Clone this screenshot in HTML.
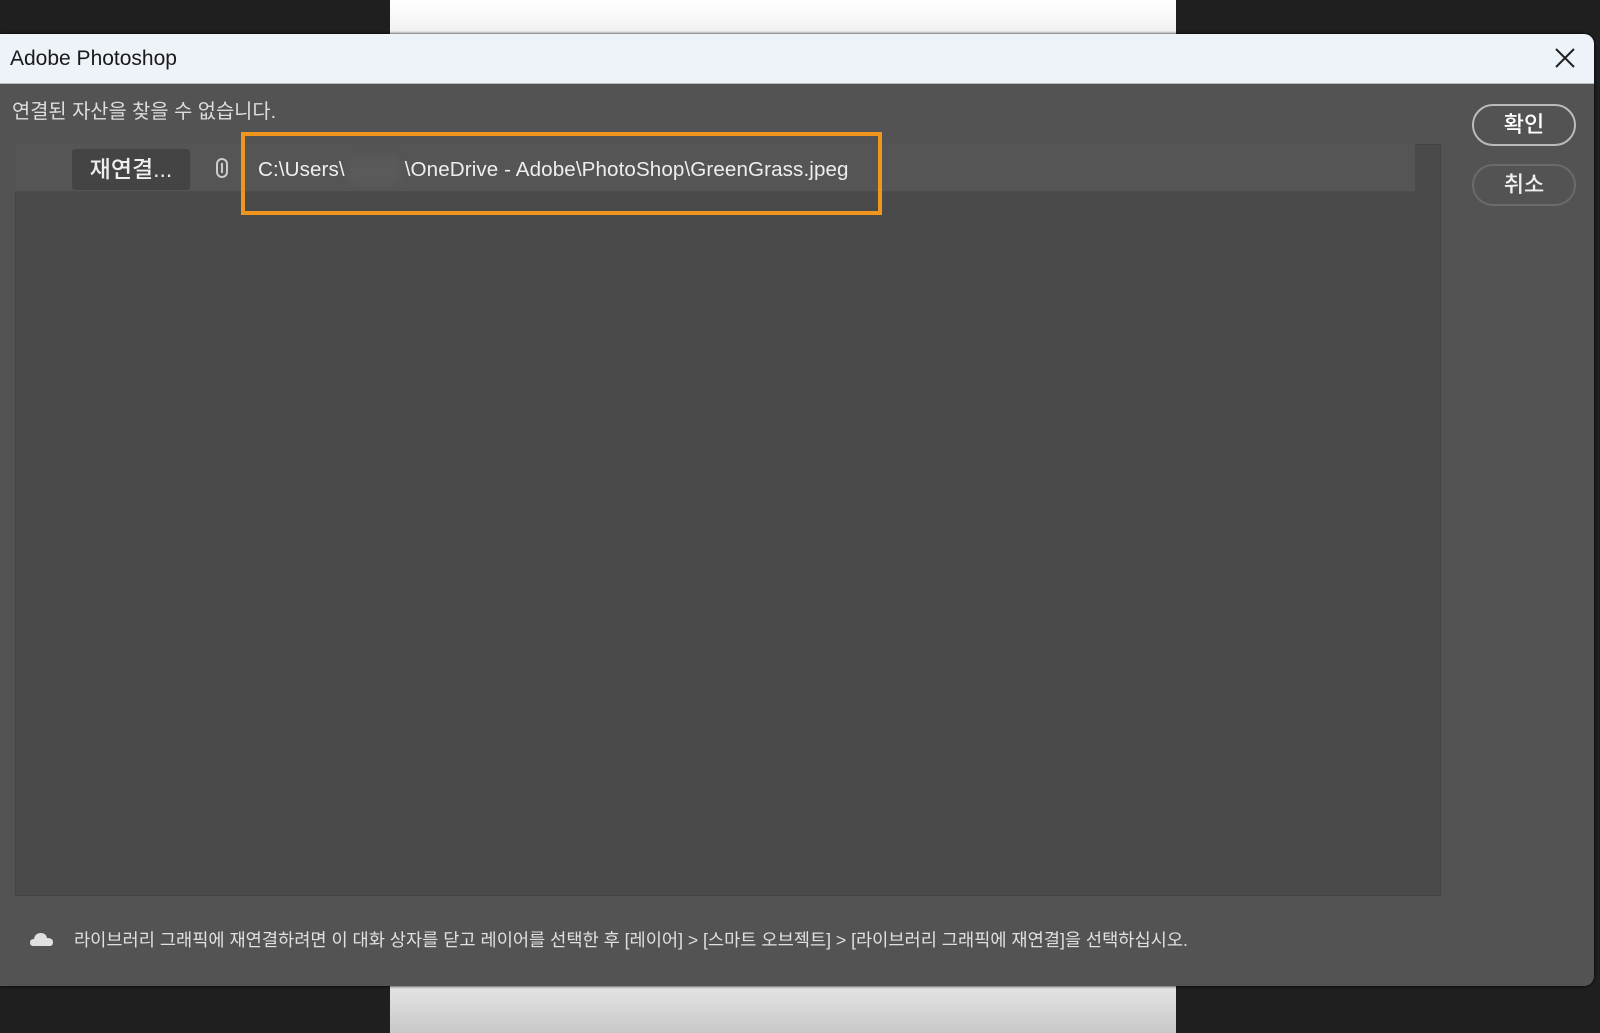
<!DOCTYPE html>
<html><head><meta charset="utf-8"><style>
*{margin:0;padding:0;box-sizing:border-box}
body{width:1600px;height:1033px;background:#1f1f1f;position:relative;overflow:hidden;font-family:"Liberation Sans","Noto Sans CJK KR",sans-serif}
.abs{position:absolute}
</style></head><body>
<div class="abs" style="left:390px;top:0;width:786px;height:40px;background:linear-gradient(#fff,#eee)"></div>
<div class="abs" style="left:390px;top:980px;width:786px;height:53px;background:linear-gradient(#e8e8e8,#c8c8c8)"></div>
<div class="abs" style="left:0;top:34px;width:1594px;height:952px;background:#535353;border-radius:0 10px 10px 0;overflow:hidden;box-shadow:0 0 3px #000">
  <div class="abs" style="left:0;top:0;width:1594px;height:50px;background:#eef2f9;border-bottom:1px solid #bbb"></div>
  <div class="abs" style="left:10px;top:13px;font-size:21px;color:#1a1a1a">Adobe Photoshop</div>
  <svg class="abs" style="left:1554px;top:13px" width="22" height="22" viewBox="0 0 22 22"><path d="M2 2L20 20M20 2L2 20" stroke="#222" stroke-width="2"/></svg>
  <div class="abs" style="left:12px;top:61px;font-size:19.8px;color:#ddd">연결된 자산을 찾을 수 없습니다.</div>
  <div class="abs" style="left:15px;top:110px;width:1426px;height:752px;background:#4a4a4a;border:1px solid #444"></div>
  <div class="abs" style="left:15px;top:110px;width:1400px;height:48px;background:#555;border-bottom:1px solid #4c4c4c"></div>
  <div class="abs" style="left:72px;top:115px;width:118px;height:41px;background:#444;border-radius:3px;color:#eee;font-size:23px;text-align:center;line-height:41px;font-weight:500">재연결...</div>
  <div class="abs" style="left:216px;top:124px;width:12px;height:20px;border:2px solid #ccc;border-radius:6px"></div>
  <div class="abs" style="left:221px;top:129px;width:2px;height:10px;background:#ccc"></div>
  <div class="abs" style="left:241px;top:98px;width:641px;height:83px;border:4px solid #f0951e"></div>
  <div class="abs" style="left:347px;top:122px;width:55px;height:30px;background:#5a5a5a;border-radius:12px;filter:blur(3px)"></div>
  <div class="abs" style="left:258px;top:124px;font-size:20.6px;color:#eee;white-space:nowrap;letter-spacing:0.1px">C:\Users\<span style="display:inline-block;width:60px"></span>\OneDrive - Adobe\PhotoShop\GreenGrass.jpeg</div>
  <div class="abs" style="left:1472px;top:70px;width:104px;height:42px;border:2px solid #bbb;border-radius:21px;color:#fff;font-size:22px;text-align:center;line-height:38px;font-weight:500">확인</div>
  <div class="abs" style="left:1472px;top:130px;width:104px;height:42px;border:2px solid #6a6a6a;border-radius:21px;color:#eee;font-size:22px;text-align:center;line-height:38px;font-weight:500">취소</div>
  <svg class="abs" style="left:30px;top:896px" width="24" height="16" viewBox="0 0 24 16"><path d="M3 16Q0 16 0 12.5Q0 9 4 9Q5 3 11 3Q16 3 17 8Q23 8 23 12Q23 16 20 16Z" fill="#e0e0e0"/></svg>
  <div class="abs" style="left:74px;top:893px;font-size:17.6px;color:#e0e0e0;white-space:nowrap">라이브러리 그래픽에 재연결하려면 이 대화 상자를 닫고 레이어를 선택한 후 [레이어] &gt; [스마트 오브젝트] &gt; [라이브러리 그래픽에 재연결]을 선택하십시오.</div>
</div>
</body></html>
